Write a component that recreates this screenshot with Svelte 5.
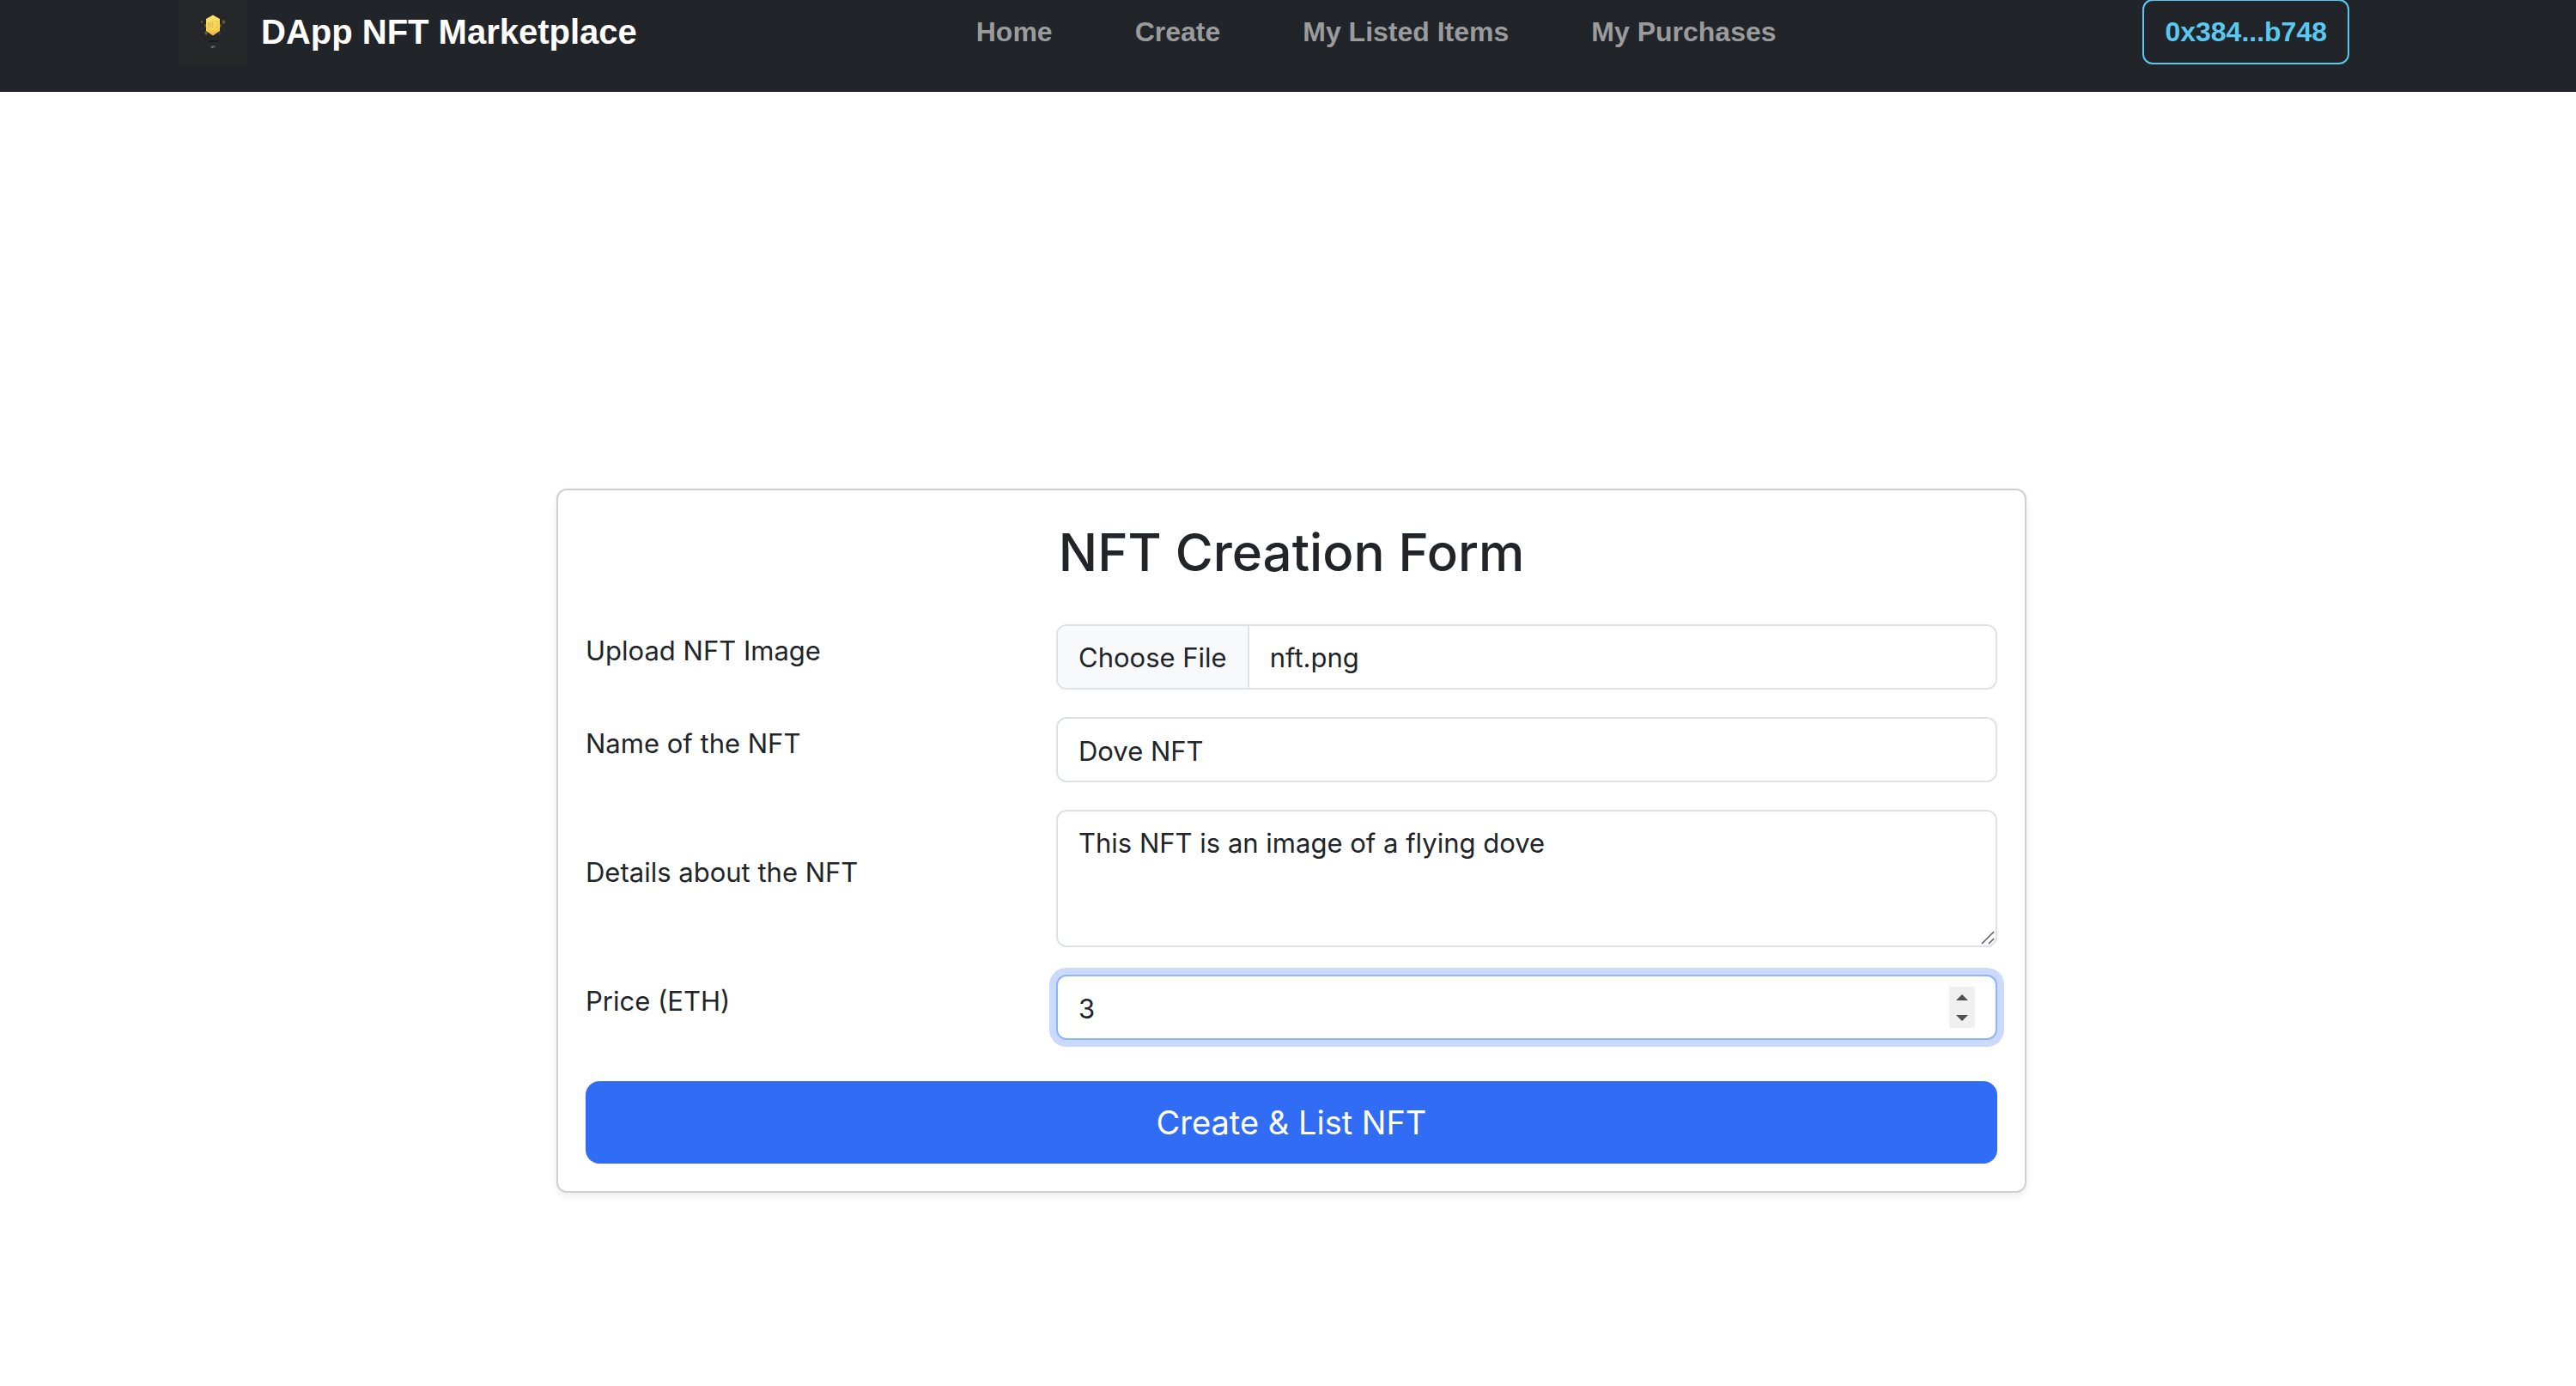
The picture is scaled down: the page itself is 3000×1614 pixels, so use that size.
<script>
  import { onMount } from 'svelte';

  const links = ['Home', 'Create', 'My Listed Items', 'My Purchases'];

  let name = $state('Dove NFT');
  let details = $state('This NFT is an image of a flying dove');
  let price = $state(3);
  let fileInput;

  onMount(() => {
    const transfer = new DataTransfer();
    transfer.items.add(new File([''], 'nft.png', { type: 'image/png' }));
    fileInput.files = transfer.files;
  });
</script>

<header class="navbar">
  <a class="brand" href="#home">
    <svg class="logo" viewBox="0 0 80 80" aria-hidden="true">
      <defs>
        <linearGradient id="gold" x1="0" y1="0" x2="0" y2="1">
          <stop offset="0" stop-color="#fbe573" />
          <stop offset="0.7" stop-color="#f6d053" />
          <stop offset="1" stop-color="#e8b43c" />
        </linearGradient>
      </defs>
      <rect width="80" height="80" fill="#262728" />
      <ellipse cx="27" cy="28.5" rx="1.2" ry="1.6" fill="#6d5a26" />
      <ellipse cx="52.5" cy="28.5" rx="1.8" ry="2.2" fill="#6d5a26" />
      <ellipse cx="32" cy="41.5" rx="1.6" ry="2.2" fill="#6d5a26" />
      <circle cx="27" cy="36.5" r="1.3" fill="#25345f" />
      <circle cx="52.5" cy="36.5" r="1.1" fill="#25345f" />
      <circle cx="47.5" cy="41.5" r="1.7" fill="#223a78" />
      <rect x="30" y="31" width="20" height="4" rx="2" fill="#6d5a26" />
      <path d="M40 20.5 48 25v14l-8 5.500-8-5.500V25z" fill="url(#gold)" />
      <path d="M34.500 36v-7l3 6v-7M39.500 36v-8h2.500M39.500 31.500h2M43 27.500h3.500M45 27.500V36" fill="none" stroke="#dcae3e" stroke-width="0.6" />
      <ellipse cx="40" cy="51" rx="6.500" ry="1" fill="#18191a" />
      <path d="M38.200 59v-2.500l1.200 2.500v-2.500M40.200 59v-2.500h1M41.400 56.500h1.200M42 56.500V59" fill="none" stroke="#97999b" stroke-width="0.5" />
    </svg>
    <span>DApp NFT Marketplace</span>
  </a>
  <nav class="links">
    {#each links as link}
      <a href="#{link.toLowerCase().replaceAll(' ', '-')}">{link}</a>
    {/each}
  </nav>
  <button class="wallet" type="button">0x384...b748</button>
</header>

<main>
  <form class="card" onsubmit={(e) => e.preventDefault()}>
    <h1>NFT Creation Form</h1>
    <div class="fields">
      <label for="image">Upload NFT Image</label>
      <input class="control file" id="image" type="file" bind:this={fileInput} />

      <label for="name">Name of the NFT</label>
      <input class="control" id="name" type="text" bind:value={name} />

      <label for="details">Details about the NFT</label>
      <div class="wrap">
        <textarea class="control" id="details" bind:value={details}></textarea>
        <svg class="grip" viewBox="0 0 16 16" aria-hidden="true">
          <path d="M1 15 15 1M9 15l6-6" fill="none" stroke="#58595b" stroke-width="1.5" />
        </svg>
      </div>

      <label for="price">Price (ETH)</label>
      <div class="wrap">
        <input class="control focused" id="price" type="number" bind:value={price} />
        <div class="spinner">
          <button type="button" aria-label="Increase price" onclick={() => (price += 1)}>
            <svg viewBox="0 0 14 7"><path d="M7 0 14 7H0z" fill="#4f4f4f" /></svg>
          </button>
          <button type="button" aria-label="Decrease price" onclick={() => (price -= 1)}>
            <svg viewBox="0 0 14 7"><path d="M0 0h14L7 7z" fill="#4f4f4f" /></svg>
          </button>
        </div>
      </div>
    </div>
    <button class="submit" type="submit">Create &amp; List NFT</button>
  </form>
</main>

<style>
  :global(body) {
    background: #fff;
    color: #212529;
    font-family: Inter, 'Liberation Sans', sans-serif;
  }

  .navbar {
    display: flex;
    align-items: center;
    margin-top: -1px;
    padding: 0 264px 32px 208px;
    background: #212529;
    font-family: 'Liberation Sans', Arial, sans-serif;
    font-weight: 700;
  }

  .brand {
    display: flex;
    align-items: center;
    gap: 16px;
    color: #fff;
    font-size: 40px;
    text-decoration: none;
    white-space: nowrap;
  }

  .logo {
    width: 80px;
    height: 80px;
    margin: -2px 0;
  }

  .links {
    display: flex;
    flex: 1;
    justify-content: center;
    gap: 96px;
    padding-right: 32px;
  }

  .links a {
    color: #9a9b9c;
    font-size: 32px;
    text-decoration: none;
    white-space: nowrap;
  }

  .wallet {
    box-sizing: border-box;
    height: 76px;
    padding: 0 24px;
    border: 2px solid #5bc8ef;
    border-radius: 12px;
    background: transparent;
    color: #5bc8ef;
    font: inherit;
    font-size: 32px;
  }

  main {
    padding: 462px 0 64px 8px;
  }

  .card {
    box-sizing: border-box;
    max-width: 1712px;
    margin: 0 auto;
    padding: 32px;
    border: 2px solid #d0d0d0;
    border-radius: 12px;
    background: #fff;
    box-shadow: 0 4px 8px rgba(0, 0, 0, 0.08);
  }

  h1 {
    margin: 0 0 44px;
    font-size: 60px;
    font-weight: 500;
    line-height: 80px;
    text-align: center;
  }

  .fields {
    display: grid;
    grid-template-columns: 1fr 2fr;
    align-items: center;
    row-gap: 32px;
    margin-bottom: 48px;
  }

  label {
    margin-bottom: 14px;
    font-size: 31px;
    line-height: 48px;
  }

  .wrap {
    position: relative;
    display: flex;
  }

  .control {
    box-sizing: border-box;
    width: 100%;
    height: 76px;
    margin: 0;
    padding: 13px 24px 11px;
    border: 2px solid #dee2e6;
    border-radius: 12px;
    outline: none;
    background: #fff;
    color: #212529;
    font-family: inherit;
    font-size: 31px;
    line-height: 48px;
  }

  textarea.control {
    height: 160px;
    resize: none;
  }

  .focused {
    border-color: #8fb4f8;
    box-shadow: 0 0 0 8px #cbd9fc;
    appearance: textfield;
  }

  .focused::-webkit-inner-spin-button {
    appearance: none;
    margin: 0;
  }

  .file {
    overflow: hidden;
  }

  .file::file-selector-button {
    margin: -13px 24px -11px -24px;
    padding: 13px 24px 11px;
    border: 0 solid #dee2e6;
    border-right-width: 2px;
    border-radius: 0;
    background: #f8f9fb;
    color: #212529;
    font: inherit;
    line-height: 48px;
  }

  .grip {
    position: absolute;
    right: 3px;
    bottom: 3px;
    width: 16px;
    height: 16px;
  }

  .spinner {
    position: absolute;
    top: 14px;
    right: 26px;
    display: flex;
    flex-direction: column;
    width: 30px;
    height: 48px;
    background: #f0f0f0;
  }

  .spinner button {
    display: flex;
    flex: 1;
    align-items: center;
    justify-content: center;
    padding: 0;
    border: 0;
    background: transparent;
  }

  .spinner svg {
    width: 14px;
    height: 7px;
  }

  .submit {
    display: block;
    width: 100%;
    height: 96px;
    border: 0;
    border-radius: 16px;
    background: #316cf4;
    color: #fff;
    font-family: inherit;
    font-size: 38px;
  }
</style>
